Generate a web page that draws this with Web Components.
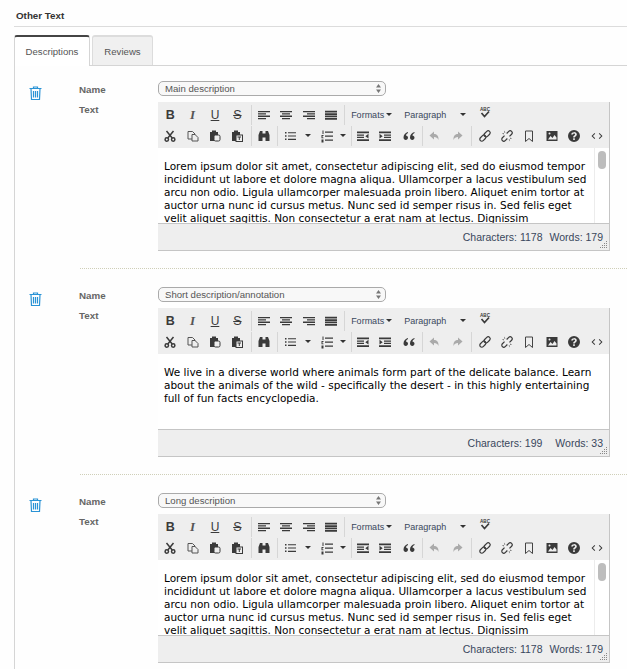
<!DOCTYPE html>
<html>
<head>
<meta charset="utf-8">
<style>
html, body { margin: 0; padding: 0; background: #fefefe; overflow: hidden; height: 669px; }
body { font-family: "Liberation Sans", Arial, sans-serif; color: #333; }
</style>
</head>
<body>
<other-text>
  <text-entry name="Main description" counts="long"></text-entry>
  <text-entry name="Short description/annotation" counts="short"></text-entry>
  <text-entry name="Long description" counts="long"></text-entry>
</other-text>

<script>
const LOREM = "Lorem ipsum dolor sit amet, consectetur adipiscing elit, sed do eiusmod tempor incididunt ut labore et dolore magna aliqua. Ullamcorper a lacus vestibulum sed arcu non odio. Ligula ullamcorper malesuada proin libero. Aliquet enim tortor at auctor urna nunc id cursus metus. Nunc sed id semper risus in. Sed felis eget velit aliquet sagittis. Non consectetur a erat nam at lectus. Dignissim"
const SHORT = "We live in a diverse world where animals form part of the delicate balance. Learn about the animals of the wild - specifically the desert - in this highly entertaining full of fun facts encyclopedia."

const svg = (body) => `<svg width="16" height="16" viewBox="0 0 16 16" fill="#3a3a3a">${body}</svg>`

const lines = (rows) => rows.map(([x, y, w, h]) => `M${x} ${y}h${w}v${h}h-${w}z`).join("")

const icons = {
  bold: `<span style="font:bold 12.5px 'Liberation Sans'">B</span>`,
  italic: `<span style="font:italic bold 13px 'Liberation Serif';color:#555">I</span>`,
  underline: `<span style="font:12px 'Liberation Sans';text-decoration:underline">U</span>`,
  strike: `<span style="font:12.5px 'Liberation Sans';text-decoration:line-through">S</span>`,
  left: svg(`<path d="${lines([[2, 4, 12, 1.3], [2, 6.3, 8, 1.3], [2, 8.6, 12, 1.3], [2, 10.9, 8, 1.3]])}"/>`),
  center: svg(`<path d="${lines([[2, 4, 12, 1.3], [4, 6.3, 8, 1.3], [2, 8.6, 12, 1.3], [4, 10.9, 8, 1.3]])}"/>`),
  right: svg(`<path d="${lines([[2, 4, 12, 1.3], [6, 6.3, 8, 1.3], [2, 8.6, 12, 1.3], [6, 10.9, 8, 1.3]])}"/>`),
  justify: svg(`<path d="${lines([[2, 3.8, 12, 1.7], [2, 6.2, 12, 1.7], [2, 8.6, 12, 1.7], [2, 11, 12, 1.7]])}"/>`),
  cut: svg(`<g fill="none" stroke="#3a3a3a" stroke-width="1.5"><circle cx="4.8" cy="11.5" r="1.7"/><circle cx="11.2" cy="11.5" r="1.7"/><path d="M5.8 10L11.5 3M10.2 10L4.5 3"/></g>`),
  copy: svg(`<g fill="#eee" stroke="#555" stroke-width="1"><path d="M3 3.5h4.5L10 6v5H3z"/><path d="M7 6.5h3l3 3V13H7z"/></g>`),
  paste: svg(`<path d="M3 4h2V2.5h4V4h2v9H3z"/><rect x="7" y="7" width="6" height="6" rx="1.5" fill="#eee" stroke="#3a3a3a"/>`),
  pasteText: svg(`<path d="M3 4h2V2.5h4V4h2v9H3z"/><rect x="7" y="7" width="6.5" height="6.5" fill="#eee" stroke="#3a3a3a"/><path d="M8.500 8.500h3.500v1h-1.200V12h-1V9.500H8.500z"/>`),
  find: svg(`<path d="M4 3h2.500v2.500h3V3H12l1.500 4v6H9.500V9.500h-3V13h-4V7z"/>`),
  bullist: svg(`<path d="${lines([[3, 4, 1.5, 1.5], [3, 7.3, 1.5, 1.5], [3, 10.6, 1.5, 1.5], [6, 4.2, 8, 1.1], [6, 7.5, 8, 1.1], [6, 10.8, 8, 1.1]])}"/>`),
  numlist: svg(`<path d="${lines([[3.5, 2.5, 1, 3.5], [2.5, 7, 2, 1], [2.5, 8, 1, 1.5], [2.5, 9.5, 2, 0.8], [2.5, 11.5, 2, 3], [6, 3.5, 8, 1.2], [6, 7.5, 8, 1.2], [6, 11.5, 8, 1.2]])}"/>`),
  outdent: svg(`<path d="${lines([[2, 3.5, 12, 1.8], [2, 6.5, 7, 1.2], [2, 8.8, 7, 1.2], [2, 11.2, 12, 1.8]])}M13.5 5.800v4.700L10.300 8.200z"/>`),
  indent: svg(`<path d="${lines([[2, 3.5, 12, 1.8], [7, 6.5, 7, 1.2], [7, 8.8, 7, 1.2], [2, 11.2, 12, 1.8]])}M2.500 5.800v4.700L5.700 8.200z"/>`),
  quote: svg(`<path d="M7 4C4.500 4.800 2.500 6.500 2.500 9.500 2.500 11 3.500 12 4.800 12 6 12 7 11 7 9.800S6 7.600 4.900 7.600c.2-1 1-1.900 2.100-2.500zM13.500 4C11 4.800 9 6.500 9 9.500 9 11 10 12 11.300 12c1.200 0 2.200-1 2.200-2.200s-1-2.200-2.100-2.200c.2-1 1-1.900 2.100-2.500z"/>`),
  undo: svg(`<path d="M7 3.500L2.500 7.500 7 11.500V9c2.200 0 3.500.8 4.500 3 .2-3.500-1-6-4.500-6z" fill="#aaa"/>`),
  redo: svg(`<path d="M9 3.500l4.500 4L9 11.500V9c-2.200 0-3.500.8-4.500 3-.2-3.500 1-6 4.500-6z" fill="#aaa"/>`),
  link: svg(`<g fill="none" stroke="#3a3a3a" stroke-width="1.2" transform="rotate(-45 8 8)"><rect x="1.5" y="6" width="7" height="4" rx="2"/><rect x="7.5" y="6" width="7" height="4" rx="2"/></g>`),
  unlink: svg(`<g fill="none" stroke="#3a3a3a" stroke-width="1.2" transform="rotate(-45 8 8)"><path d="M6.500 6H3.500a2 2 0 0 0 0 4h3M9.500 6h3a2 2 0 0 1 0 4h-3"/></g><path d="M3 5l2 .6-.4.9zM5.500 2.500l.8 2-.9.3zM13 11l-2-.6.4-.9zM10.500 13.500l-.8-2 .9-.3z"/>`),
  bookmark: svg(`<path d="M4.500 3h7v10.500L8 10.500l-3.500 3z" fill="none" stroke="#444" stroke-width="1"/>`),
  image: svg(`<path d="M2.500 3h11v10h-11z"/><path d="M4 11.500l2.500-3.500 2 2 2-3 2 2.500v2z" fill="#eee"/><circle cx="5.5" cy="5.5" r="1" fill="#eee"/>`),
  help: svg(`<path fill-rule="evenodd" d="M8 2a6 6 0 1 1 0 12A6 6 0 0 1 8 2zM8 4.200c-1.500 0-2.600.9-2.800 2.200l1.600.2c.1-.6.600-1 1.200-1 .6 0 1.100.4 1.100.9 0 .5-.4.800-.9 1.100-.8.500-1 1-1 1.800h1.600c0-.5.200-.7.700-1 .8-.6 1.300-1.100 1.300-2 0-1.400-1.100-2.400-2.800-2.400zM7.200 10.300v1.600h1.600v-1.600z"/>`),
  code: svg(`<path d="M5.500 5L2.500 8l3 3 .7-.7L3.900 8l2.300-2.300zM10.500 5l3 3-3 3-.7-.7L12.100 8 9.800 5.700z"/>`),
  spell: `<svg width="16" height="16" viewBox="0 0 16 16" fill="#3a3a3a" style="margin-top:-4px"><text x="8" y="6" text-anchor="middle" font-family="Liberation Sans" font-size="6" font-weight="bold" textLength="10" lengthAdjust="spacingAndGlyphs">ABC</text><path d="M4.500 8l3 3.500 4.500-5" fill="none" stroke="#3a3a3a" stroke-width="1.7"/></svg>`,
}

const barTemplate = document.createElement("template")
barTemplate.innerHTML = `
<style>
:host { display: block; background: #eeeeee; height: 46px; box-sizing: border-box; padding-top: 2px; font-size: 9px; color: #39475c; }
.row { display: flex; align-items: center; height: 21px; padding-left: 1px; }
.b { width: 22.4px; height: 20px; flex: none; display: flex; align-items: center; justify-content: center; color: #3a3a3a; line-height: 1; }
.sep { width: 1px; height: 20px; background: #d6d6d6; flex: none; margin: 0 1px 0 2px; }
.w { display: flex; align-items: center; height: 20px; flex: none; box-sizing: border-box; }
.caret { width: 0; height: 0; border: 3px solid transparent; border-top-color: #333; border-bottom: 0; display: inline-block; flex: none; }
.c { flex: none; display: flex; justify-content: center; }
.gap { flex: none; }
</style>
<div class="row" id="r1"></div>
<div class="row" id="r2"></div>
`

class EditorToolbar extends HTMLElement {
  constructor() {
    super()
    this._shadowRoot = this.attachShadow({ mode: "open" })
    this._shadowRoot.appendChild(barTemplate.content.cloneNode(true))
  }

  connectedCallback() {
    const b = (name) => `<span class="b">${icons[name]}</span>`
    const sep = `<span class="sep"></span>`
    const gap = (w) => `<span class="gap" style="width:${w}px"></span>`
    const caret = (w) => `<span class="c" style="width:${w}px"><span class="caret"></span></span>`

    this._shadowRoot.getElementById("r1").innerHTML = `
      ${b("bold")}${b("italic")}${b("underline")}${b("strike")}${sep}
      ${b("left")}${b("center")}${b("right")}${b("justify")}${sep}
      <span class="w" style="width:58px;padding-left:5px">Formats<span class="caret" style="margin-left:2px"></span></span>
      <span class="w" style="width:70px">Paragraph<span class="caret" style="margin-left:14px"></span></span>
      ${b("spell")}`

    this._shadowRoot.getElementById("r2").innerHTML = `
      ${b("cut")}${b("copy")}${b("paste")}${b("pasteText")}${sep}
      ${b("find")}${sep}
      ${b("bullist")}${caret(14)}${b("numlist")}${caret(11)}<span class="sep" style="margin-right:0"></span>
      ${b("outdent")}${b("indent")}${gap(1)}${b("quote")}${sep}
      ${b("undo")}${b("redo")}${sep}${gap(0.7)}
      ${b("link")}${b("unlink")}${b("bookmark")}${b("image")}${b("help")}${b("code")}`
  }
}

const editorTemplate = document.createElement("template")
editorTemplate.innerHTML = `
<style>
:host { display: block; width: 452px; }
.frame { border-right: 1px solid #c5c5c5; border-bottom: 1px solid #c5c5c5; }
.body { height: 75px; background: #fff; padding: 12px 6px 0 6px; box-sizing: border-box; overflow: hidden; position: relative;
  font: 10.5px/13px "DejaVu Sans", sans-serif; color: #000; }
.body.long { padding-right: 14px; }
.thumb { position: absolute; right: 3px; top: 3px; width: 8px; height: 18px; border-radius: 4px; background: #bdbdbd; }
.track { position: absolute; right: 0; top: 0; bottom: 0; width: 15px; background: #fff; border-left: 1px solid #ececec; box-sizing: border-box; }
.status { height: 27px; background: #eeeeee; border-top: 1px solid #c5c5c5; box-sizing: border-box; position: relative;
  font-size: 10.5px; color: #39475c; display: flex; justify-content: flex-end; align-items: center; padding-right: 6px; gap: 7px; }
.grip { position: absolute; right: 1px; bottom: 1px; }
</style>
<div class="frame">
  <editor-toolbar></editor-toolbar>
  <div class="body" id="body"></div>
  <div class="status"><span id="chars"></span><span id="words"></span>
    <svg class="grip" width="8" height="8" viewBox="0 0 8 8" fill="#888"><path d="M6 0h1v1H6zM4 2h1v1H4zM6 2h1v1H6zM2 4h1v1H2zM4 4h1v1H4zM6 4h1v1H6zM0 6h1v1H0zM2 6h1v1H2zM4 6h1v1H4zM6 6h1v1H6z"/></svg>
  </div>
</div>
`

class TextEditor extends HTMLElement {
  static get observedAttributes() {
    return ["counts"]
  }

  constructor() {
    super()
    this._shadowRoot = this.attachShadow({ mode: "open" })
    this._shadowRoot.appendChild(editorTemplate.content.cloneNode(true))
  }

  attributeChangedCallback() {
    const long = this.getAttribute("counts") == "long"
    const body = this._shadowRoot.getElementById("body")
    const status = this._shadowRoot.querySelector(".status")
    if (long) {
      body.classList.add("long")
      body.innerHTML = `${LOREM}<span class="track"><span class="thumb"></span></span>`
    } else {
      body.textContent = SHORT
      status.style.gap = "13px"
    }
    this._shadowRoot.getElementById("chars").textContent = long ? "Characters: 1178" : "Characters: 199"
    this._shadowRoot.getElementById("words").textContent = long ? "Words: 179" : "Words: 33"
  }
}

const entryTemplate = document.createElement("template")
entryTemplate.innerHTML = `
<style>
:host { display: block; padding: 15px 0 3px; }
.grid { display: grid; grid-template-columns: 64px 79px 1fr; }
.trash { padding: 5px 0 0 14px; }
.labels { font-size: 9.8px; font-weight: bold; color: #666; }
.labels div:first-child { margin-top: 3px; }
.labels div + div { margin-top: 9px; }
.select { width: 228px; height: 15px; box-sizing: border-box; border: 1px solid #aaa; border-radius: 5px; background: #f8f8f8;
  font-size: 9.6px; color: #555; padding-left: 6px; line-height: 13px; position: relative; margin-bottom: 6px; }
.arrows { position: absolute; right: 4px; top: 2px; }
hr { border: 0; border-top: 1px dotted #cfcfb8; margin: 17px 0 0 65px; height: 0; }
:host(:last-child) hr { display: none; }
</style>
<div class="grid">
  <div class="trash">
    <svg width="13" height="14" viewBox="0 0 13 14" fill="none" stroke="#2a93d5" stroke-width="1.2">
      <path d="M.5 2.500h12M4.500 2.500V1h4v1.500M2 2.500l.5 11h8l.5-11M4.500 5v6.500M6.500 5v6.500M8.500 5v6.500"/>
    </svg>
  </div>
  <div class="labels"><div>Name</div><div>Text</div></div>
  <div>
    <div class="select"><span id="name"></span>
      <svg class="arrows" width="5" height="9" viewBox="0 0 5 9" fill="#777"><path d="M2.500 0L5 3.500H0zM2.500 9L0 5.500h5z"/></svg>
    </div>
    <text-editor id="editor"></text-editor>
  </div>
</div>
<hr>
`

class TextEntry extends HTMLElement {
  constructor() {
    super()
    this._shadowRoot = this.attachShadow({ mode: "open" })
    this._shadowRoot.appendChild(entryTemplate.content.cloneNode(true))
  }

  connectedCallback() {
    this._shadowRoot.getElementById("name").textContent = this.getAttribute("name")
    this._shadowRoot.getElementById("editor").setAttribute("counts", this.getAttribute("counts"))
  }
}

const pageTemplate = document.createElement("template")
pageTemplate.innerHTML = `
<style>
:host { display: block; padding: 0 0 0 14px; }
h2 { font-size: 9.8px; font-weight: bold; color: #333; margin: 0; padding: 10px 0 0 2px; height: 16px; }
.rule { border-top: 1px solid #dcdcdc; }
.tabs { display: flex; margin-top: 8px; height: 31px; box-sizing: border-box; border-bottom: 1px solid #d5d5d5; gap: 2px; }
.tab { font-size: 9.6px; height: 30px; box-sizing: border-box; display: flex; align-items: center; justify-content: center; border-radius: 3px 3px 0 0; }
.active { width: 76px; height: 31px; background: #fff; border: 1px solid #d5d5d5; border-top: 2px solid #444; border-bottom: 0; color: #555; }
.other { width: 61px; background: #f0f0f0; border: 1px solid #dcdcdc; border-top-width: 2px; border-bottom: 0; color: #555; }
.panel { border-left: 1px solid #d5d5d5; height: 620px; background: #fefefe; }
</style>
<h2>Other Text</h2>
<div class="rule"></div>
<div class="tabs"><div class="tab active">Descriptions</div><div class="tab other">Reviews</div></div>
<div class="panel"><slot></slot></div>
`

class OtherText extends HTMLElement {
  constructor() {
    super()
    this._shadowRoot = this.attachShadow({ mode: "open" })
    this._shadowRoot.appendChild(pageTemplate.content.cloneNode(true))
  }
}

window.customElements.define("editor-toolbar", EditorToolbar)
window.customElements.define("text-editor", TextEditor)
window.customElements.define("text-entry", TextEntry)
window.customElements.define("other-text", OtherText)
</script>
</body>
</html>
